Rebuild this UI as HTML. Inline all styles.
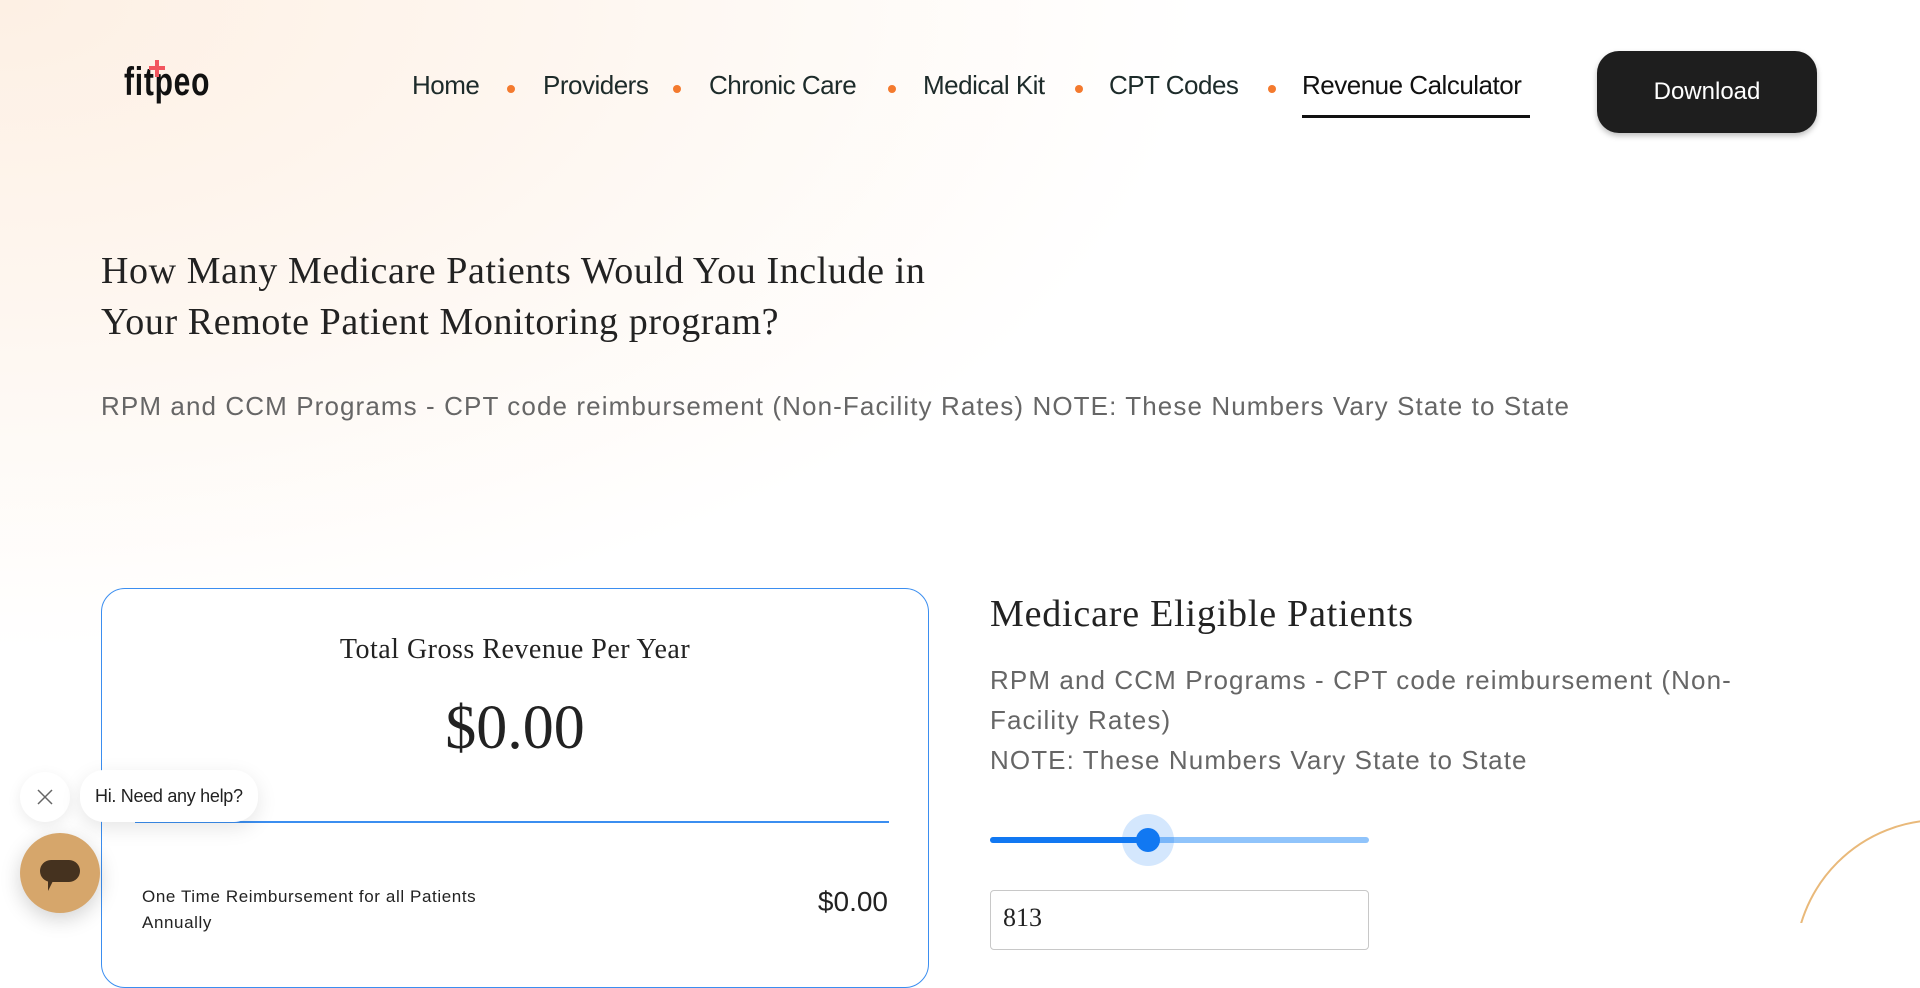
<!DOCTYPE html>
<html><head><meta charset="utf-8"><style>
*{margin:0;padding:0;box-sizing:border-box}
body{width:1920px;height:923px;overflow:hidden;position:relative;font-family:"Liberation Sans",sans-serif;background:#fff}
.bg{position:absolute;inset:0;background:radial-gradient(ellipse 1200px 650px at 0 0,#fdf0e4 0%,#fef6ef 45%,rgba(255,255,255,0) 100%)}
.a{position:absolute;white-space:nowrap}
.nav{top:70px;font-size:26px;color:#1d2b2a;letter-spacing:-0.5px}
.dot{position:absolute;top:85px;width:8px;height:8px;border-radius:50%;background:#f47a2e}
.serif{font-family:"Liberation Serif",serif}
</style></head><body>
<div class="bg"></div>
<div class="a" style="left:124px;top:60px;font-family:'Liberation Sans',sans-serif;font-size:40px;font-weight:bold;color:#111;transform:scaleX(0.75);transform-origin:left;letter-spacing:1px">fitpeo</div>
<div class="a" style="left:155px;top:60px;width:4px;height:17px;background:#f2555e"></div>
<div class="a" style="left:149px;top:66px;width:16px;height:4px;background:#f2555e"></div>

<div class="a nav" style="left:412px">Home</div>
<div class="dot" style="left:507px"></div>
<div class="a nav" style="left:543px">Providers</div>
<div class="dot" style="left:673px"></div>
<div class="a nav" style="left:709px">Chronic Care</div>
<div class="dot" style="left:888px"></div>
<div class="a nav" style="left:923px">Medical Kit</div>
<div class="dot" style="left:1075px"></div>
<div class="a nav" style="left:1109px">CPT Codes</div>
<div class="dot" style="left:1268px"></div>
<div class="a nav" style="left:1302px;color:#111">Revenue Calculator</div>
<div class="a" style="left:1302px;top:115px;width:228px;height:3px;background:#111"></div>
<div class="a" style="left:1597px;top:51px;width:220px;height:82px;border-radius:22px;background:#1e1e1e;color:#fff;font-size:24px;text-align:center;line-height:82px;box-shadow:0 3px 6px rgba(0,0,0,.25)">Download</div>

<div class="a serif" style="left:101px;top:246px;font-size:38px;letter-spacing:0.6px;line-height:51px;color:#222">How Many Medicare Patients Would You Include in<br>Your Remote Patient Monitoring program?</div>
<div class="a" style="left:101px;top:391px;font-size:26px;letter-spacing:1.1px;color:#666">RPM and CCM Programs - CPT code reimbursement (Non-Facility Rates) NOTE: These Numbers Vary State to State</div>

<div class="a" style="left:101px;top:588px;width:828px;height:400px;border:1.5px solid #3b8ef0;border-radius:24px;background:#fff"></div>
<div class="a serif" style="left:101px;top:634px;width:828px;text-align:center;font-size:28px;letter-spacing:0.5px;color:#222">Total Gross Revenue Per Year</div>
<div class="a serif" style="left:101px;top:693px;width:828px;text-align:center;font-size:62px;color:#222">$0.00</div>
<div class="a" style="left:135px;top:821px;width:754px;height:1.5px;background:#3b8ef0"></div>
<div class="a" style="left:142px;top:884px;font-size:17px;letter-spacing:0.6px;line-height:26px;color:#222">One Time Reimbursement for all Patients<br>Annually</div>
<div class="a" style="left:780px;top:886px;width:108px;text-align:right;font-size:28px;color:#222">$0.00</div>

<div class="a serif" style="left:990px;top:592px;font-size:38px;letter-spacing:0.8px;color:#222">Medicare Eligible Patients</div>
<div class="a" style="left:990px;top:660px;font-size:26px;letter-spacing:1.1px;line-height:40px;color:#666">RPM and CCM Programs - CPT code reimbursement (Non-<br>Facility Rates)<br>NOTE: These Numbers Vary State to State</div>
<div class="a" style="left:990px;top:837px;width:379px;height:6px;border-radius:3px;background:#90c4fb"></div>
<div class="a" style="left:990px;top:837px;width:158px;height:6px;border-radius:3px;background:#1178f2"></div>
<div class="a" style="left:1122px;top:814px;width:52px;height:52px;border-radius:50%;background:rgba(17,120,242,.18)"></div>
<div class="a" style="left:1136px;top:828px;width:24px;height:24px;border-radius:50%;background:#1178f2"></div>
<div class="a" style="left:990px;top:890px;width:379px;height:60px;border:1px solid #c8c8c8;border-radius:4px;background:#fff"></div>
<div class="a serif" style="left:1003px;top:903px;font-size:26px;color:#222">813</div>

<svg class="a" style="left:1790px;top:815px" width="130" height="108"><circle cx="150" cy="150" r="145" fill="none" stroke="#e9b97a" stroke-width="2"/></svg>

<div class="a" style="left:20px;top:772px;width:50px;height:50px;border-radius:50%;background:#fff;box-shadow:0 4px 14px rgba(0,0,0,.08)"></div>
<svg class="a" style="left:36px;top:788px" width="18" height="18"><path d="M2 2L16 16M16 2L2 16" stroke="#666" stroke-width="1.5"/></svg>
<div class="a" style="left:80px;top:770px;width:178px;height:52px;border-radius:24px;background:#fff;box-shadow:0 6px 20px rgba(0,0,0,.1);font-size:18px;line-height:52px;padding-left:15px;color:#222;letter-spacing:-0.3px">Hi. Need any help?</div>
<div class="a" style="left:20px;top:833px;width:80px;height:80px;border-radius:50%;background:#d6a66b;box-shadow:0 6px 20px rgba(0,0,0,.18)"></div>
<svg class="a" style="left:38px;top:857px" width="44" height="44"><rect x="2" y="3" width="40" height="22" rx="11" fill="#45321f"/><path d="M10 24L10 34L15 24Z" fill="#45321f"/></svg>
</body></html>
